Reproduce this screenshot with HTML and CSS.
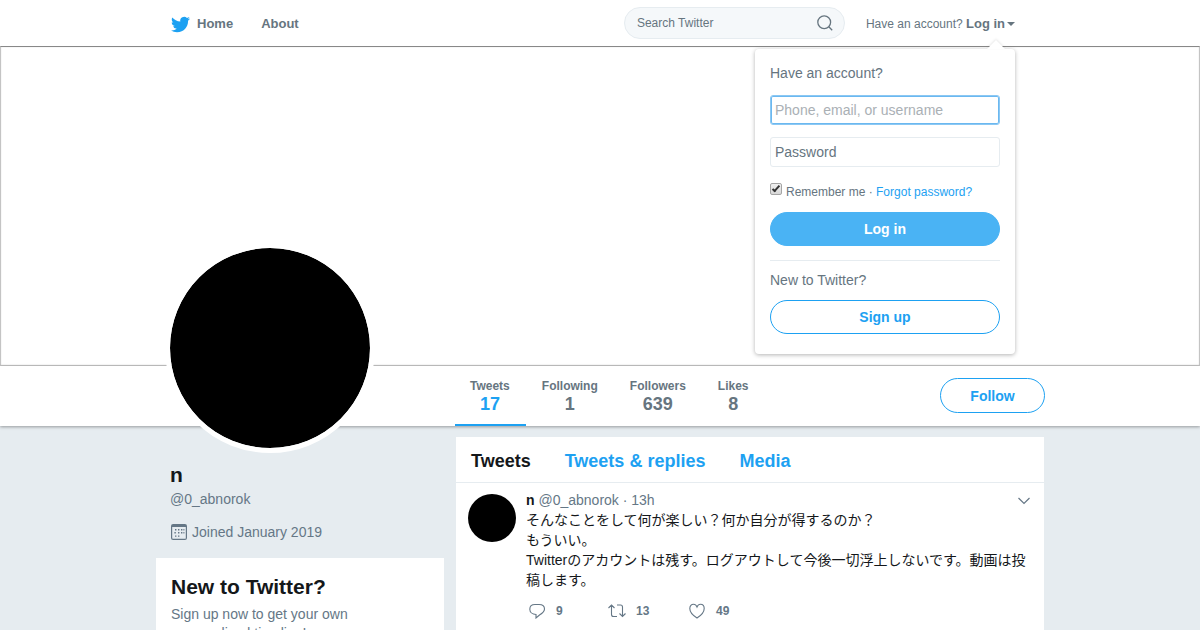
FILE: index.html
```html
<!DOCTYPE html>
<html lang="en">
<head>
    <meta charset="UTF-8">
    <meta name="viewport" content="width=device-width, initial-scale=1.0">
    <title>n (@0_abnorok) | Twitter</title>
    <link rel="stylesheet" href="styles.css">
</head>
<body>
    <header class="topbar">
        <div class="container topbar-inner">
            <nav class="main-nav">
                <a class="home-link" href="#">
                    <svg class="bird" viewBox="0 0 24 24"><path d="M23.953 4.57a10 10 0 01-2.825.775 4.958 4.958 0 002.163-2.723c-.951.555-2.005.959-3.127 1.184a4.92 4.92 0 00-8.384 4.482C7.69 8.095 4.067 6.13 1.64 3.162a4.822 4.822 0 00-.666 2.475c0 1.71.87 3.213 2.188 4.096a4.904 4.904 0 01-2.228-.616v.06a4.923 4.923 0 003.946 4.827 4.996 4.996 0 01-2.212.085 4.936 4.936 0 004.604 3.417 9.867 9.867 0 01-6.102 2.105c-.39 0-.779-.023-1.17-.067a13.995 13.995 0 007.557 2.209c9.053 0 13.998-7.496 13.998-13.985 0-.21 0-.42-.015-.63A9.935 9.935 0 0024 4.59z"/></svg>
                    Home
                </a>
                <a href="#">About</a>
            </nav>
            <form class="search">
                <input type="text" placeholder="Search Twitter" aria-label="Search Twitter">
                <button type="button" aria-label="Search">
                    <svg viewBox="0 0 16 16"><circle cx="7.2" cy="7.2" r="6.4"/><path d="M11.8 11.8l3.4 3.4"/></svg>
                </button>
            </form>
            <div class="session">
                <a class="session-link" href="#"><span>Have an account? <strong>Log in</strong></span><span class="caret"></span></a>
                <div class="login-menu">
                    <form>
                        <p class="menu-title">Have an account?</p>
                        <input class="field focused" type="text" placeholder="Phone, email, or username" aria-label="Phone, email, or username">
                        <input class="field" type="password" placeholder="Password" aria-label="Password">
                        <div class="remember">
                            <input type="checkbox" id="remember" checked>
                            <span><label for="remember">Remember me</label> · <a href="#">Forgot password?</a></span>
                        </div>
                        <button class="btn btn-primary" type="button">Log in</button>
                    </form>
                    <div class="signup">
                        <p class="menu-title">New to Twitter?</p>
                        <button class="btn" type="button">Sign up</button>
                    </div>
                </div>
            </div>
        </div>
    </header>

    <div class="banner"></div>

    <div class="profile-bar">
        <div class="container profile-inner">
            <div class="avatar-large"></div>
            <nav class="stats">
                <a class="stat active" href="#"><span>Tweets</span><b>17</b></a>
                <a class="stat" href="#"><span>Following</span><b>1</b></a>
                <a class="stat" href="#"><span>Followers</span><b>639</b></a>
                <a class="stat" href="#"><span>Likes</span><b>8</b></a>
            </nav>
            <button class="btn btn-follow" type="button">Follow</button>
        </div>
    </div>

    <main class="container columns">
        <aside class="sidebar">
            <div class="profile-card">
                <h1>n</h1>
                <a class="handle" href="#">@0_abnorok</a>
                <p class="joined">
                    <svg viewBox="0 0 16 16">
                        <rect x="0.6" y="0.6" width="14.8" height="14.8" rx="1.5" fill="none" stroke="#657786" stroke-width="1.2"/>
                        <path d="M1 1h14v2H1z"/>
                        <path d="M7 5h1.400v1.400H7zM10 5h1.400v1.400H10zM4 5h1.400v1.400H4zM12.400 5h1v1.400h-1zM3.400 8h1.400v1.400H3.400zM7 8h1.400v1.400H7zM10 8h1.400v1.400H10zM12.400 8h1v1.400h-1zM4 11.400h1.400v1.400H4zM7 11.400h1.400v1.400H7z"/>
                    </svg>
                    Joined January 2019
                </p>
            </div>
            <section class="promo">
                <h2>New to Twitter?</h2>
                <p>Sign up now to get your own personalized timeline!</p>
            </section>
        </aside>

        <section class="timeline">
            <nav class="tabs">
                <a class="current" href="#">Tweets</a>
                <a href="#">Tweets &amp; replies</a>
                <a href="#">Media</a>
            </nav>
            <article class="tweet">
                <div class="avatar"></div>
                <div class="tweet-body">
                    <div class="tweet-header">
                        <span><b>n</b> @0_abnorok · 13h</span>
                        <button type="button" aria-label="More">
                            <svg class="chevron" viewBox="0 0 12 8"><path d="M0.5 1L6 6.5L11.5 1"/></svg>
                        </button>
                    </div>
                    <p class="tweet-text" lang="ja">そんなことをして何が楽しい？何か自分が得するのか？<br>もういい。<br>Twitterのアカウントは残す。ログアウトして今後一切浮上しないです。動画は投稿します。</p>
                    <div class="actions">
                        <button type="button" aria-label="Reply 9">
                            <svg viewBox="0 0 18 16"><path d="M7 1.500h4c3.200 0 5.500 1.800 5.500 4.500 0 2.800-2.500 4.500-5 6l-3.500 3v-3.500C4.500 11.300 1.800 9.200 1.800 6.200 1.800 3.300 4 1.500 7 1.500z"/></svg>
                            9
                        </button>
                        <button type="button" aria-label="Retweet 13">
                            <svg viewBox="0 0 18 16"><path d="M0.500 5L3.500 2l3 3M3.500 2v9.500q0 2 2 2H9M17.500 10.500l-3 3-3-3M14.500 13.500V4q0-2-2-2H9"/></svg>
                            13
                        </button>
                        <button type="button" aria-label="Like 49">
                            <svg viewBox="0 0 18 16"><path d="M9 15C5 12.500 1.800 9 1.800 5.500 1.800 3 3.400 1.300 5.500 1.300 7 1.300 8.300 2.300 9 4c.7-1.700 2-2.700 3.500-2.700 2.100 0 3.700 1.700 3.700 4.200C16.200 9 13 12.500 9 15z"/></svg>
                            49
                        </button>
                    </div>
                </div>
            </article>
        </section>
    </main>
</body>
</html>
```
FILE: styles.css
```css
* {
    box-sizing: border-box;
}

body {
    margin: 0;
    background-color: #e6ecf0;
    color: #14171a;
    font-family: "Liberation Sans", Arial, "Noto Sans CJK JP", sans-serif;
    font-size: 14px;
    line-height: 20px;
}

a {
    color: #1da1f2;
    text-decoration: none;
}

p, h1, h2 {
    margin: 0;
}

button, input {
    font-family: inherit;
}

button {
    padding: 0;
    border: none;
    background: none;
    cursor: pointer;
}

.container {
    max-width: 890px;
    margin: 0 auto;
}

/* Top bar */
.topbar {
    background-color: #fff;
}

.topbar-inner {
    display: flex;
    align-items: center;
    height: 46px;
    padding: 0 30px 0 16px;
}

.main-nav {
    display: flex;
    gap: 28px;
    margin-right: auto;
    padding-top: 2px;
}

.main-nav a {
    color: #66757f;
    font-size: 13px;
    font-weight: bold;
}

.home-link {
    display: flex;
    align-items: center;
    gap: 7px;
}

.bird {
    width: 19px;
    height: 19px;
    fill: #1da1f2;
}

.search {
    display: flex;
    align-items: center;
    width: 221px;
    height: 32px;
    margin-right: 21px;
    padding: 0 11px 0 12px;
    background-color: #f5f8fa;
    border: 1px solid #e6ecf0;
    border-radius: 16px;
}

.search input {
    flex: 1;
    min-width: 0;
    padding: 0;
    border: none;
    background: none;
    font-size: 12px;
}

.search input::placeholder {
    color: #66757f;
}

.search svg {
    display: block;
    width: 16px;
    height: 16px;
    fill: none;
    stroke: #66757f;
    stroke-width: 1.3;
}

.session {
    position: relative;
    padding-top: 2px;
}

.session-link {
    display: flex;
    align-items: center;
    gap: 2px;
    color: #66757f;
    font-size: 12px;
}

.session-link strong {
    font-size: 13px;
}

.caret {
    border: 4px solid transparent;
    border-top-color: #66757f;
    border-bottom: none;
}

/* Login dropdown */
.login-menu {
    position: absolute;
    top: 37px;
    right: 0;
    z-index: 10;
    width: 260px;
    padding: 14px 15px 20px;
    background-color: #fff;
    border-radius: 4px;
    box-shadow: 0 1px 4px rgba(0, 0, 0, 0.3);
    color: #66757f;
}

.login-menu::before {
    content: "";
    position: absolute;
    top: -9px;
    right: 10px;
    border: 9px solid transparent;
    border-top: none;
    border-bottom-color: #fff;
    filter: drop-shadow(0 -1px 1px rgba(0, 0, 0, 0.1));
}

.field {
    display: block;
    width: 100%;
    height: 30px;
    margin-top: 12px;
    padding: 0 4px;
    border: 1px solid #e6ecf0;
    border-radius: 3px;
    font-size: 14px;
}

.field::placeholder {
    color: #66757f;
}

.field.focused {
    border-color: #8cc8f3;
    box-shadow: inset 0 0 0 1px #6bb8f0;
}

.field.focused::placeholder {
    color: #aab0b5;
}

.remember {
    display: flex;
    gap: 4px;
    margin: 15px 0 10px;
    font-size: 12px;
}

.remember input {
    appearance: none;
    width: 12px;
    height: 12px;
    margin: 1px 0 0;
    border: 1px solid #a5a5a5;
    border-radius: 2px;
    background: linear-gradient(#f0f0f0, #d8d8d8);
}

.remember input:checked::after {
    content: "";
    display: block;
    width: 2px;
    height: 6px;
    margin-left: 3px;
    border: solid #333;
    border-width: 0 2px 2px 0;
    transform: rotate(42deg);
}

.btn {
    display: block;
    width: 100%;
    height: 34px;
    border: 1px solid #1da1f2;
    border-radius: 18px;
    background-color: #fff;
    color: #1da1f2;
    font-size: 14px;
    font-weight: bold;
}

.btn-primary {
    border-color: #4ab3f4;
    background-color: #4ab3f4;
    color: #fff;
}

.signup {
    margin-top: 14px;
    padding-top: 9px;
    border-top: 1px solid #e6ecf0;
}

.signup .btn {
    margin-top: 10px;
}

/* Profile banner and stats */
.banner {
    height: 320px;
    background-color: #fff;
    border: 1px solid #c4c4c4;
    border-top-color: #888;
    box-shadow: inset 0 0 1px #bbb;
}

.profile-bar {
    position: relative;
    background-color: #fff;
    box-shadow: 0 1px 3px rgba(0, 0, 0, 0.35);
}

.profile-inner {
    position: relative;
    display: flex;
    align-items: flex-start;
    justify-content: space-between;
    height: 60px;
    padding-left: 300px;
}

.avatar-large {
    position: absolute;
    top: -123px;
    left: 10px;
    width: 210px;
    height: 210px;
    border: 5px solid #fff;
    border-radius: 50%;
    background-color: #000;
    background-clip: padding-box;
}

.stats {
    display: flex;
    gap: 1px;
    align-self: stretch;
}

.stat {
    display: flex;
    flex-direction: column;
    align-items: center;
    padding: 12px 16px 0 15px;
    border-bottom: 2px solid transparent;
    color: #66757f;
    font-size: 12px;
    font-weight: bold;
    line-height: 16px;
}

.stat b {
    font-size: 18px;
    line-height: 20px;
}

.stat.active {
    border-bottom-color: #1da1f2;
}

.stat.active b {
    color: #1da1f2;
}

.btn-follow {
    width: 105px;
    height: 35px;
    margin-top: 12px;
}

/* Columns */
.columns {
    display: grid;
    grid-template-columns: 288px 1fr;
    gap: 12px;
    padding: 11px 1px 0;
}

.profile-card {
    padding: 26px 14px 16px;
}

.profile-card h1 {
    font-size: 21px;
    line-height: 24px;
}

.handle {
    display: block;
    margin-top: 2px;
    color: #657786;
}

.joined {
    display: flex;
    align-items: center;
    gap: 5px;
    margin-top: 13px;
    color: #657786;
}

.joined svg {
    width: 16px;
    height: 16px;
    margin-left: 1px;
    fill: #657786;
}

.promo {
    padding: 15px 15px 0;
    background-color: #fff;
}

.promo h2 {
    font-size: 21px;
    line-height: 28px;
}

.promo p {
    max-width: 200px;
    margin-top: 4px;
    color: #657786;
    line-height: 19px;
}

/* Timeline */
.timeline {
    background-color: #fff;
}

.tabs {
    display: flex;
    gap: 34px;
    padding: 12px 15px 9px;
    border-bottom: 1px solid #e6ecf0;
    font-size: 18px;
    font-weight: bold;
    line-height: 24px;
}

.tabs .current {
    color: #14171a;
}

.tweet {
    display: flex;
    gap: 10px;
    padding: 7px 12px 0;
}

.avatar {
    flex: none;
    width: 48px;
    height: 48px;
    margin-top: 4px;
    border-radius: 50%;
    background-color: #000;
}

.tweet-body {
    flex: 1;
}

.tweet-header {
    display: flex;
    justify-content: space-between;
    color: #657786;
}

.tweet-header b {
    color: #14171a;
}

.tweet-header button {
    padding: 2px 2px 0;
}

.chevron {
    display: block;
    width: 12px;
    height: 8px;
    fill: none;
    stroke: #657786;
    stroke-width: 1.2;
}

.actions {
    display: flex;
    margin-top: 11px;
}

.actions button {
    display: flex;
    align-items: center;
    gap: 10px;
    width: 80px;
    height: 20px;
    padding-left: 2px;
    color: #657786;
    font-size: 12px;
    font-weight: bold;
}

.actions svg {
    width: 18px;
    height: 16px;
    fill: none;
    stroke: #657786;
    stroke-width: 1.1;
}
```
